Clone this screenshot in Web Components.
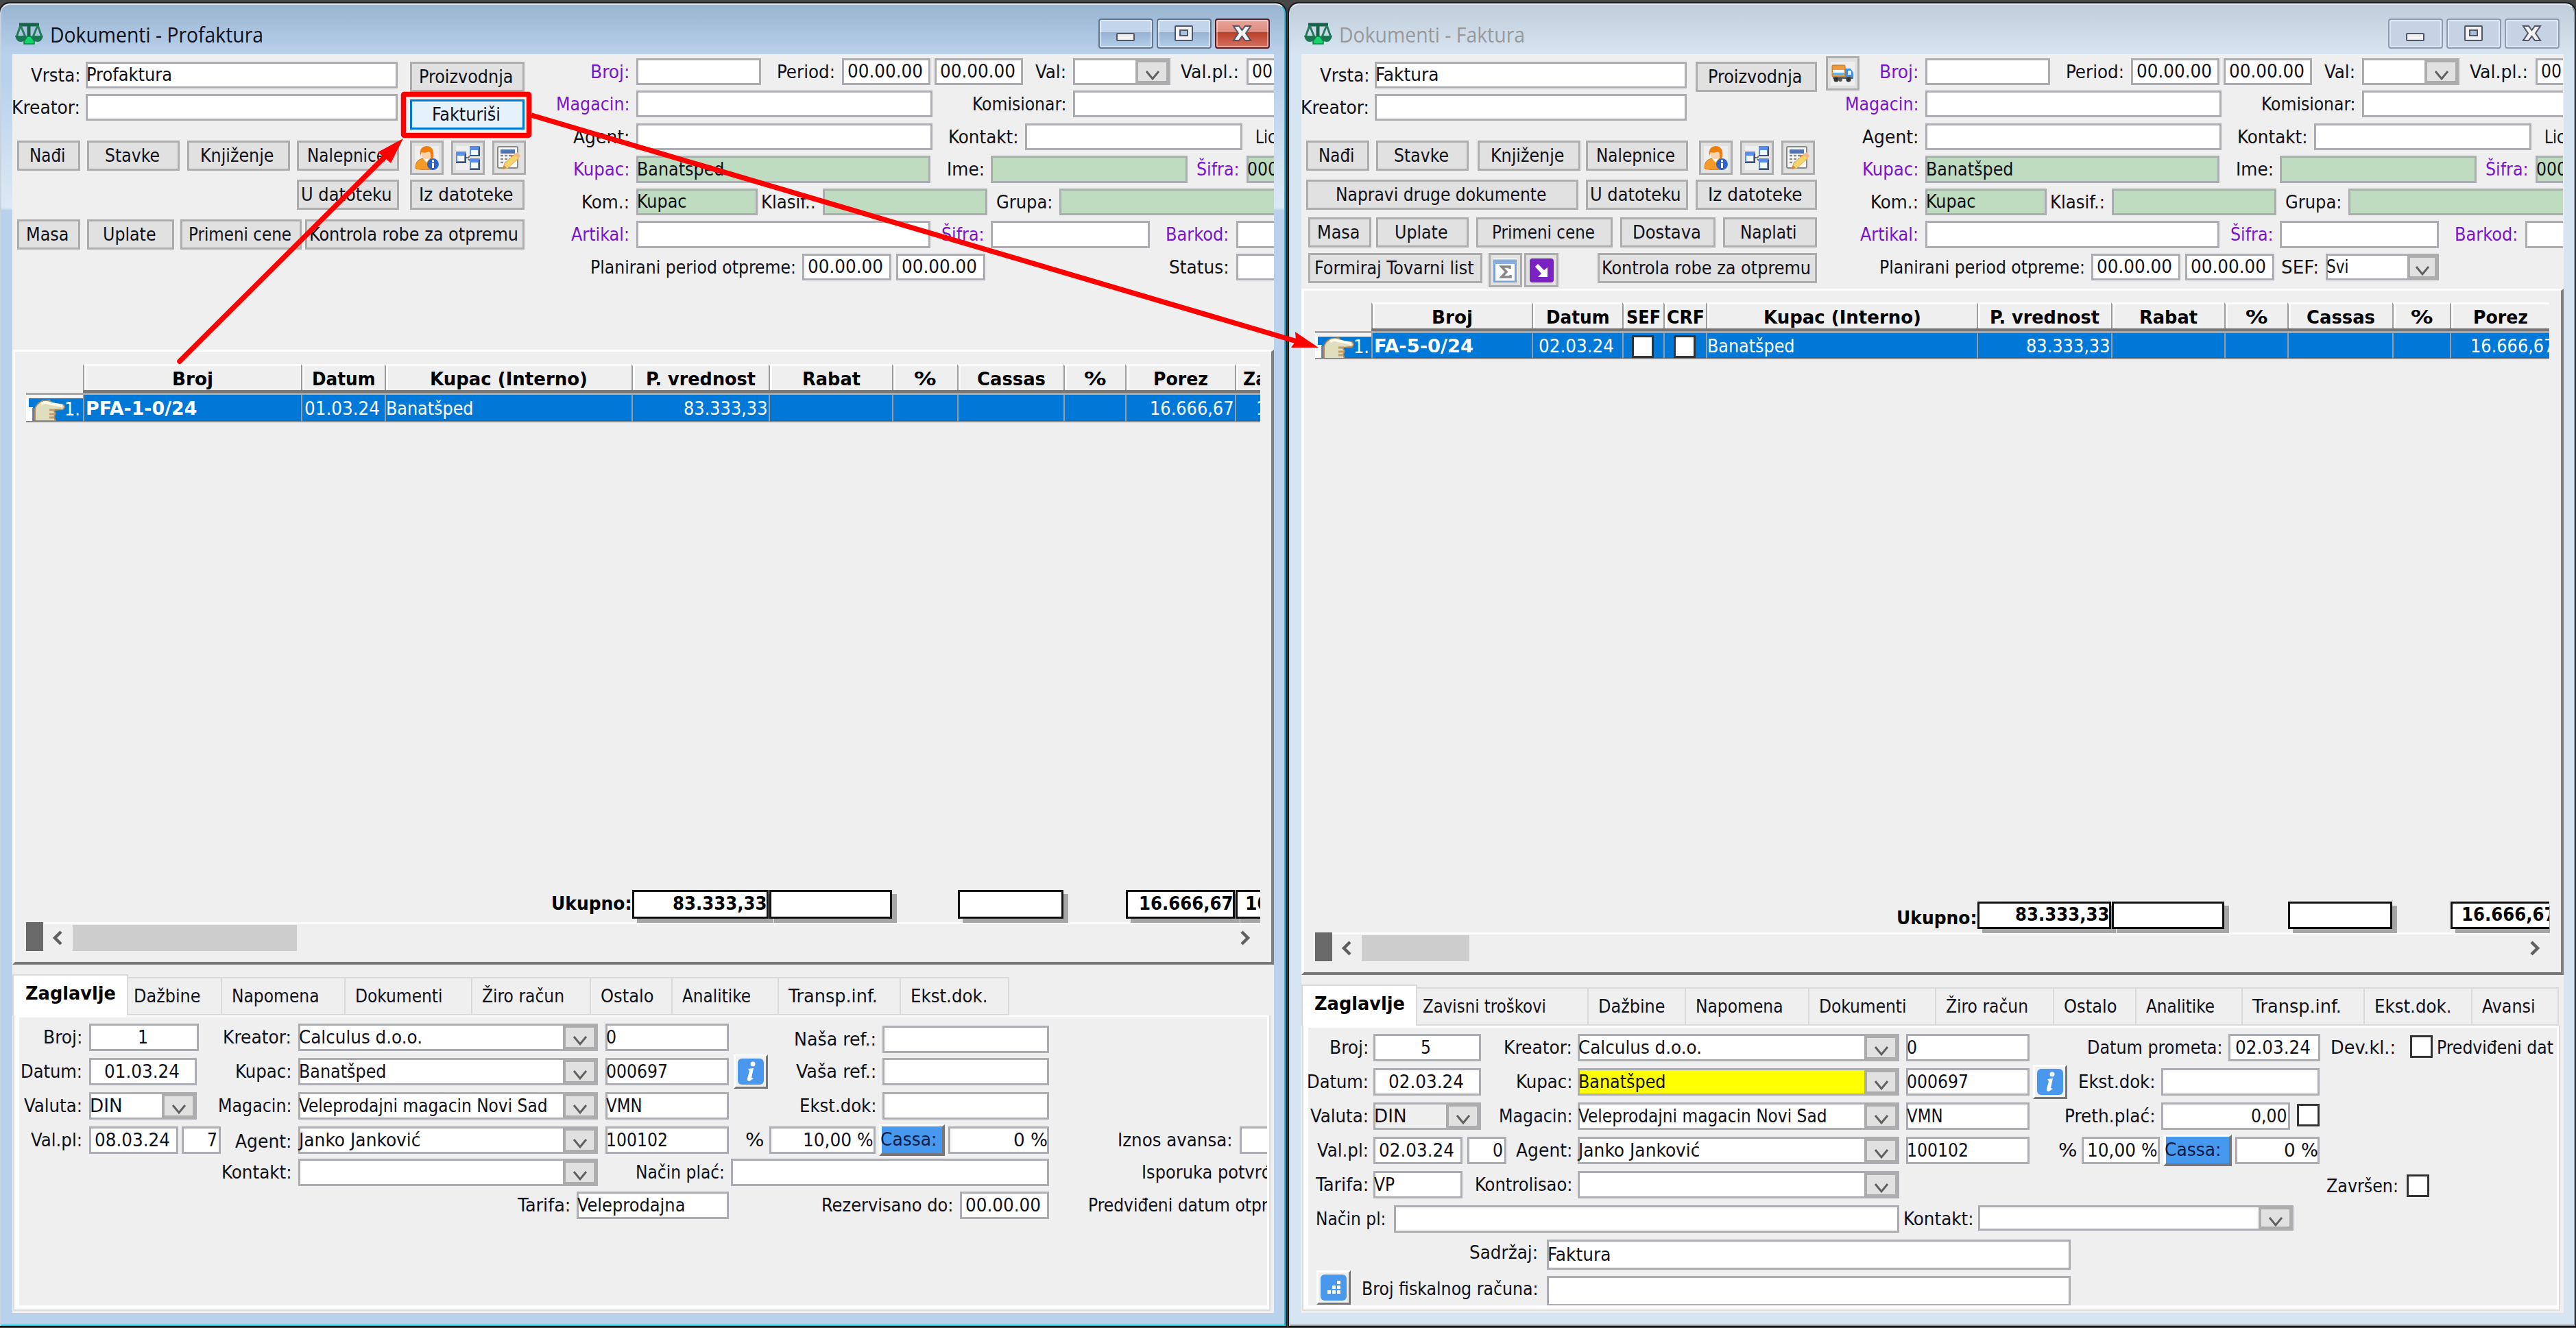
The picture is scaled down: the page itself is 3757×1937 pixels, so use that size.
<!DOCTYPE html>
<html lang="sr">
<head>
<meta charset="utf-8">
<title>Dokumenti</title>
<style>
    html, body {
        margin: 0;
        width: 3757px;
        height: 1937px;
        overflow: hidden;
        background: #474747;
    }

    body {
        display: flex;
        position: relative;
        font-family: 'DejaVu Sans Condensed', 'DejaVu Sans', sans-serif;
        font-stretch: condensed;
        font-size: 27.3px;
        color: #101018;
    }

    .tools {
        display: flex;
        overflow: hidden;
        flex: none;
    }
</style>
</head>
<body>

<doc-window caption="Dokumenti - Profaktura" caption-width="311" active>
    <div class="tools" style="height: 431px">
        <form-stack x="18" y="79" w="757">
            <form-row y="90" h="39">
                <ui-label to="117">Vrsta:</ui-label><ui-field at="125" w="455">Profaktura</ui-field>
                <ui-button at="598" w="167">Proizvodnja</ui-button>
            </form-row>
            <form-row y="137" h="39">
                <ui-label to="117">Kreator:</ui-label><ui-field at="125" w="455"></ui-field>
                <ui-button at="598" w="167" dy="8" focused>Fakturiši</ui-button>
            </form-row>
            <form-row y="205" h="50">
                <ui-button at="25" w="92">Nađi</ui-button><ui-button at="127" w="135">Stavke</ui-button>
                <ui-button at="273" w="150">Knjiženje</ui-button><ui-button at="433" w="149">Nalepnice</ui-button>
                <ui-icon at="598" w="49" name="person"></ui-icon><ui-icon at="658" w="49" name="tree"></ui-icon>
                <ui-icon at="718" w="49" name="note"></ui-icon>
            </form-row>
            <form-row y="262" h="44">
                <ui-button at="433" w="149">U datoteku</ui-button><ui-button at="598" w="167">Iz datoteke</ui-button>
            </form-row>
            <form-row y="320" h="44">
                <ui-button at="25" w="92">Masa</ui-button><ui-button at="127" w="127">Uplate</ui-button>
                <ui-button at="263" w="177">Primeni cene</ui-button><ui-button at="445" w="320">Kontrola robe za otpremu</ui-button>
            </form-row>
        </form-stack>
        <search-fields></search-fields>
    </div>
    <record-list doc="profaktura" style="height: 897px"></record-list>
    <tab-strip doc="profaktura"></tab-strip>
    <tab-page>
        <form-stack x="28" y="1484" w="1820">
            <form-row y="1493" h="40">
                <ui-label to="120">Broj:</ui-label><ui-field at="130" w="160" align="center">1</ui-field>
                <ui-label to="425">Kreator:</ui-label><ui-combo at="435" w="437">Calculus d.o.o.</ui-combo><ui-field at="883" w="180">0</ui-field>
                <ui-label to="1278" dy="3">Naša ref.:</ui-label><ui-field at="1287" w="243" dy="3"></ui-field>
            </form-row>
            <form-row y="1543" h="40">
                <ui-label to="120">Datum:</ui-label><ui-field at="130" w="157" align="center">01.03.24</ui-field>
                <ui-label to="425">Kupac:</ui-label><ui-combo at="435" w="437">Banatšped</ui-combo><ui-field at="883" w="180">000697</ui-field>
                <ui-icon at="1070" w="50" dy="-5" name="info" raised></ui-icon>
                <ui-label to="1278">Vaša ref.:</ui-label><ui-field at="1287" w="243"></ui-field>
            </form-row>
            <form-row y="1593" h="40">
                <ui-label to="120">Valuta:</ui-label><ui-combo at="130" w="157">DIN</ui-combo>
                <ui-label to="425">Magacin:</ui-label><ui-combo at="435" w="437">Veleprodajni magacin Novi Sad</ui-combo><ui-field at="883" w="180">VMN</ui-field>
                <ui-label to="1278">Ekst.dok:</ui-label><ui-field at="1287" w="243"></ui-field>
            </form-row>
            <form-row y="1643" h="40">
                <ui-label to="120">Val.pl:</ui-label><ui-field at="130" w="130" align="center">08.03.24</ui-field><ui-field at="265" w="57" align="right">7</ui-field>
                <ui-label to="425" dy="2">Agent:</ui-label><ui-combo at="435" w="437">Janko Janković</ui-combo><ui-field at="883" w="180">100102</ui-field>
                <ui-label to="1114">%</ui-label><ui-field at="1122" w="155" align="right">10,00 %</ui-field>
                <ui-button at="1282" w="96" dy="-3" accent>Cassa:</ui-button><ui-field at="1383" w="147" align="right">0 %</ui-field>
                <ui-label to="1797">Iznos avansa:</ui-label><ui-field at="1808" w="90"></ui-field>
            </form-row>
            <form-row y="1690" h="40">
                <ui-label to="425">Kontakt:</ui-label><ui-combo at="435" w="437"></ui-combo>
                <ui-label to="1057">Način plać:</ui-label><ui-field at="1066" w="464"></ui-field>
                <ui-label from="1665">Isporuka potvrđ</ui-label>
            </form-row>
            <form-row y="1738" h="40">
                <ui-label to="832">Tarifa:</ui-label><ui-field at="841" w="222">Veleprodajna</ui-field>
                <ui-label to="1390">Rezervisano do:</ui-label><ui-field at="1400" w="130" align="center">00.00.00</ui-field>
                <ui-label from="1587">Predviđeni datum otpr</ui-label>
            </form-row>
        </form-stack>
    </tab-page>
</doc-window>

<doc-window caption="Dokumenti - Faktura" caption-width="271">
    <div class="tools" style="height: 342px">
        <form-stack x="18" y="79" w="757">
            <form-row y="90" h="39">
                <ui-label to="117">Vrsta:</ui-label><ui-field at="125" w="455">Faktura</ui-field>
                <ui-button at="593" w="177">Proizvodnja</ui-button>
            </form-row>
            <form-row y="137" h="39">
                <ui-label to="117">Kreator:</ui-label><ui-field at="125" w="455"></ui-field>
            </form-row>
            <form-row y="205" h="50">
                <ui-button at="25" w="92">Nađi</ui-button><ui-button at="127" w="135">Stavke</ui-button>
                <ui-button at="275" w="150">Knjiženje</ui-button><ui-button at="433" w="149">Nalepnice</ui-button>
                <ui-icon at="598" w="49" name="person"></ui-icon><ui-icon at="658" w="49" name="tree"></ui-icon>
                <ui-icon at="718" w="49" name="note"></ui-icon>
            </form-row>
            <form-row y="262" h="44">
                <ui-button at="25" w="397">Napravi druge dokumente</ui-button>
                <ui-button at="433" w="149">U datoteku</ui-button><ui-button at="593" w="177">Iz datoteke</ui-button>
            </form-row>
            <form-row y="317" h="44">
                <ui-button at="28" w="92">Masa</ui-button><ui-button at="127" w="135">Uplate</ui-button>
                <ui-button at="273" w="199">Primeni cene</ui-button><ui-button at="483" w="139">Dostava</ui-button>
                <ui-button at="633" w="137">Naplati</ui-button>
            </form-row>
            <form-row y="369" h="50">
                <ui-button at="28" w="254">Formiraj Tovarni list</ui-button>
                <ui-icon at="291" w="49" name="sum"></ui-icon><ui-icon at="343" w="50" name="export"></ui-icon>
                <ui-button at="450" w="320">Kontrola robe za otpremu</ui-button>
            </form-row>
        </form-stack>
        <search-fields invoice></search-fields>
    </div>
    <record-list doc="faktura" style="height: 1001px"></record-list>
    <tab-strip doc="faktura"></tab-strip>
    <tab-page>
        <form-stack x="28" y="1499" w="1820">
            <form-row y="1508" h="40">
                <ui-label to="116">Broj:</ui-label><ui-field at="123" w="157" align="center">5</ui-field>
                <ui-label to="413">Kreator:</ui-label><ui-combo at="421" w="469">Calculus d.o.o.</ui-combo><ui-field at="900" w="180">0</ui-field>
                <ui-label to="1361">Datum prometa:</ui-label><ui-field at="1370" w="134" align="center">02.03.24</ui-field>
                <ui-label to="1614">Dev.kl.:</ui-label><ui-check at="1635" w="33" dy="2"></ui-check><ui-label from="1674">Predviđeni dat</ui-label>
            </form-row>
            <form-row y="1558" h="40">
                <ui-label to="116">Datum:</ui-label><ui-field at="123" w="157" align="center">02.03.24</ui-field>
                <ui-label to="413">Kupac:</ui-label><ui-combo at="421" w="469" fill="#ffff00">Banatšped</ui-combo><ui-field at="900" w="180">000697</ui-field>
                <ui-icon at="1085" w="50" dy="-5" name="info" raised></ui-icon>
                <ui-label to="1263">Ekst.dok:</ui-label><ui-field at="1272" w="231"></ui-field>
            </form-row>
            <form-row y="1608" h="40">
                <ui-label to="116">Valuta:</ui-label><ui-combo at="123" w="157" fill="#efefef">DIN</ui-combo>
                <ui-label to="413">Magacin:</ui-label><ui-combo at="421" w="469">Veleprodajni magacin Novi Sad</ui-combo><ui-field at="900" w="180">VMN</ui-field>
                <ui-label to="1263">Preth.plać:</ui-label><ui-field at="1272" w="188" align="right">0,00</ui-field>
                <ui-check at="1470" w="33" dy="2"></ui-check>
            </form-row>
            <form-row y="1658" h="40">
                <ui-label to="116">Val.pl:</ui-label><ui-field at="123" w="130" align="center">02.03.24</ui-field><ui-field at="260" w="57" align="right">0</ui-field>
                <ui-label to="413">Agent:</ui-label><ui-combo at="421" w="469">Janko Janković</ui-combo><ui-field at="900" w="180">100102</ui-field>
                <ui-label to="1149">%</ui-label><ui-field at="1156" w="114" align="right">10,00 %</ui-field>
                <ui-button at="1275" w="100" dy="-3" accent>Cassa:</ui-button><ui-field at="1380" w="123" align="right">0 %</ui-field>
            </form-row>
            <form-row y="1708" h="40">
                <ui-label to="116">Tarifa:</ui-label><ui-field at="123" w="130">VP</ui-field>
                <ui-label to="413">Kontrolisao:</ui-label><ui-combo at="421" w="469"></ui-combo>
                <ui-label to="1618" dy="2">Završen:</ui-label><ui-check at="1630" w="33" dy="5"></ui-check>
            </form-row>
            <form-row y="1758" h="40">
                <ui-label to="141">Način pl:</ui-label><ui-field at="153" w="737"></ui-field>
                <ui-label to="998">Kontakt:</ui-label><ui-combo at="1005" w="460" style="height: 37px"></ui-combo>
            </form-row>
            <form-row y="1808" h="44">
                <ui-label to="363" dy="-1">Sadržaj:</ui-label><ui-field at="376" w="764">Faktura</ui-field>
            </form-row>
            <form-row y="1861" h="44">
                <ui-icon at="40" w="50" dy="-8" name="dots" raised></ui-icon>
                <ui-label to="363" dy="-1">Broj fiskalnog računa:</ui-label><ui-field at="376" w="764"></ui-field>
            </form-row>
        </form-stack>
    </tab-page>
</doc-window>

<step-arrows></step-arrows>

<script>
//Advance widths of the interface font at 11px, in whole pixels
const REGULAR = {
    ' ': 3, '.': 4, ',': 3, ':': 4, '-': 4, '%': 11, '/': 4, '(': 4, ')': 4,
    a: 6, b: 6, c: 5, d: 6, e: 6, f: 3, g: 6, h: 6, i: 2, j: 3, k: 5, l: 2, m: 8, n: 6, o: 6, p: 6, r: 4, s: 5, t: 4, u: 6, v: 5, z: 5,
    A: 7, B: 6, C: 7, D: 8, E: 6, F: 6, G: 7, I: 4, J: 5, K: 6, L: 5, M: 8, N: 7, O: 8, P: 6, R: 7, S: 6, T: 6, U: 7, V: 6, Z: 6,
    'š': 5, 'đ': 6, 'ž': 5, 'č': 5, 'ć': 5, 'Š': 6, 'Ž': 6
};
const BOLD = {
    ' ': 3, '.': 3, ',': 3, ':': 4, '-': 5, '%': 13, '/': 6, '(': 5, ')': 5,
    a: 7, b: 7, c: 6, d: 7, e: 7, g: 7, j: 4, k: 7, l: 3, m: 10, n: 7, o: 7, p: 7, r: 5, s: 6, t: 5, u: 7, v: 7, z: 6,
    A: 8, B: 8, C: 8, D: 8, E: 7, F: 6, I: 6, K: 8, P: 7, R: 8, S: 7, U: 8, Z: 7
};
const SCALE = 2.5;

//Text squeezed or stretched to the width of the interface font
class UiText extends HTMLElement {
    connectedCallback() {
        const root = this.shadowRoot || this.attachShadow({mode: 'open'});
        root.innerHTML = `
            <style>
                :host { display: block; flex: none; white-space: nowrap; line-height: 1.2; }
                :host([bold]) { font-weight: bold; }
                span { display: inline-block; transform-origin: 0 50%; }
            </style>
            <span><slot></slot></span>`;
        const text = this.textContent;
        const bold = this.hasAttribute('bold');
        const table = bold ? BOLD : REGULAR;
        let width = Number(this.getAttribute('width'));
        if (!width) {
            width = [...text].reduce((sum, ch) => sum + (table[ch] || (bold ? 7 : 6)), 0) * SCALE;
        }
        const span = root.querySelector('span');
        const natural = span.getBoundingClientRect().width;
        this.style.width = width + 'px';
        const shift = bold || this.hasAttribute('flush') ? 0 : -2;
        if (natural) span.style.transform = `translateX(${shift}px) scaleX(${width / natural})`;
    }
}
customElements.define('ui-text', UiText);

//Base of the form controls: takes its text and renders it in a shadow root
class Control extends HTMLElement {
    connectedCallback() {
        const root = this.shadowRoot || this.attachShadow({mode: 'open'});
        root.innerHTML = this.render(this.textContent.trim());
    }
    textTag(text, attrs = '') {
        return text ? `<ui-text ${attrs}>${text}</ui-text>` : '';
    }
}

class UiLabel extends Control {
    render(text) {
        return `
            <style>
                :host { display: flex; flex: none; align-items: center; justify-content: flex-end; height: 40px; }
                :host([from]) { justify-content: flex-start; }
                :host([key]) { color: #7a14cf; }
            </style>${this.textTag(text, 'flush')}`;
    }
}
customElements.define('ui-label', UiLabel);

class UiField extends Control {
    render(text) {
        const justify = {center: 'center', right: 'flex-end'}[this.getAttribute('align')] || 'flex-start';
        return `
            <style>
                :host {
                    display: flex; flex: none; box-sizing: border-box; align-self: stretch; align-items: center;
                    justify-content: ${justify}; border: 3px solid #abadb3;
                    background: ${this.getAttribute('fill') || '#fff'};
                }
            </style>${this.textTag(text)}`;
    }
}
customElements.define('ui-field', UiField);

class UiCombo extends Control {
    render(text) {
        return `
            <style>
                :host {
                    display: flex; flex: none; box-sizing: border-box; align-self: stretch;
                    border: 3px solid #abadb3; background: ${this.getAttribute('fill') || '#fff'};
                }
                .value { flex: 1; display: flex; align-items: center; }
                .drop {
                    width: ${this.getAttribute('drop') || 41}px; border: 3px solid #adadad; background: #e1e1e1;
                    display: flex; justify-content: center; align-items: center; outline: 1px solid #adadad;
                }
            </style>
            <div class="value">${this.textTag(text)}</div>
            <div class="drop">
                <svg width="24" height="26" viewBox="0 0 24 26"><path d="M3 12 L12 23 L21 12" fill="none" stroke="#606060" stroke-width="3"/></svg>
            </div>`;
    }
}
customElements.define('ui-combo', UiCombo);

class UiButton extends Control {
    render(text) {
        return `
            <style>
                :host {
                    display: flex; flex: none; box-sizing: border-box; height: 44px; align-items: center; justify-content: center;
                    border: 3px solid #adadad; background: #e1e1e1;
                }
                :host([focused]) { border-color: #0078d7; background: #e5f1fb; box-shadow: 0 0 0 3px #efefef; }
                :host([accent]) {
                    height: 46px; background: #4699ee; border: 3px solid; border-color: #fff #777 #777 #fff; border-width: 3px 4px 4px 4px;
                    color: #0b1b45; justify-content: flex-start;
                }
            </style>${this.textTag(text)}`;
    }
}
customElements.define('ui-button', UiButton);

class UiCheck extends Control {
    render() {
        return `<style>:host { display: block; flex: none; box-sizing: border-box; height: 33px; border: 3px solid #333; background: #fff; }</style>`;
    }
}
customElements.define('ui-check', UiCheck);

const ICONS = {
    person: `
        <rect width="35" height="35" fill="#eee"/>
        <path d="M1 33 Q0 20 12 18 L22 18 Q30 20 30 34 Q14 36 1 33Z" fill="#f59a26" stroke="#d97c10"/>
        <path d="M12 18 L17 24 L22 18Z" fill="#fff"/>
        <circle cx="17" cy="11" r="8" fill="#f9d3ac"/>
        <path d="M8 14 Q6 1 17 0 Q29 0 27 17 L23 19 Q24 11 21 8 Q15 11 10 9Z" fill="#ee7d0c"/>
        <circle cx="26.500" cy="26.500" r="8.500" fill="#2c64cf"/>
        <path d="M26.500 20.500 v3 M26.500 25 v7" stroke="#fff" stroke-width="3"/>`,
    tree: `
        <rect width="35" height="35" fill="#eee"/>
        <path d="M14 17 h4 M18 17 L22 12 M18 19 L22 23" stroke="#45618e" stroke-width="2" stroke-dasharray="3 2"/>
        <rect x="0" y="8" width="15" height="17" fill="#5a8cf0"/><rect x="2" y="14" width="10" height="8" fill="#f5f9ff"/><path d="M0 24 h14 v-13" fill="none" stroke="#35527f" stroke-width="2"/>
        <rect x="20" y="0" width="15" height="15" fill="#5a8cf0"/><rect x="22" y="6" width="10" height="7" fill="#f5f9ff"/><path d="M20 14 h14 V2" fill="none" stroke="#35527f" stroke-width="2"/>
        <rect x="20" y="18" width="15" height="17" fill="#5a8cf0"/><rect x="22" y="24" width="10" height="8" fill="#f5f9ff"/><path d="M20 34 h14 V20" fill="none" stroke="#35527f" stroke-width="2"/>`,
    note: `
        <rect x="1" y="1" width="29" height="31" rx="2" fill="#fafafa" stroke="#888" stroke-width="2"/>
        <rect x="5" y="5" width="21" height="6" fill="#4f74b1"/>
        <path d="M5 14 h17 M5 19 h14 M5 24 h9" stroke="#888" stroke-width="2.500" stroke-dasharray="4 2"/>
        <path d="M20 14.500 h5" stroke="#e2695b" stroke-width="3"/>
        <path d="M8 34 L11 25 L27 11 L32 17 L16 32Z" fill="#f5d46c" stroke="#d9a94e"/>
        <path d="M25 12 L30 9 L34 14 L31 18Z" fill="#f0b98a"/><path d="M8 34 l2 -6 4 4z" fill="#c58a55"/>`,
    truck: `
        <rect width="35" height="35" fill="#eee"/>
        <rect x="2" y="5" width="19" height="17" rx="1" fill="#ef9b3c" stroke="#c36f16"/>
        <rect x="3" y="12" width="17" height="4" fill="#fff"/><rect x="3" y="16" width="17" height="3" fill="#59b5e8"/>
        <path d="M21 10 h8 l4 6 v9 h-12z" fill="#3f8ee8"/><rect x="25" y="13" width="5" height="6" fill="#eaf5ff"/>
        <rect x="3" y="22" width="29" height="3" fill="#666"/>
        <circle cx="8" cy="26" r="3.500" fill="#333"/><circle cx="14" cy="26" r="3" fill="#555"/><circle cx="26" cy="26" r="3.500" fill="#333"/>`,
    sum: `
        <rect width="35" height="35" fill="#fff"/>
        <rect x="1.500" y="3" width="31" height="31" fill="#fbfbfb" stroke="#7ba0d4" stroke-width="3"/>
        <rect x="1" y="2" width="32" height="6" fill="#88aee0"/>
        <path d="M24 15 V12 H12 L19 19.500 L12 27 H25 V24" fill="none" stroke="#888" stroke-width="3.500"/>`,
    export: `
        <rect width="35" height="35" rx="4" fill="#7b22c2"/>
        <path d="M8 12 L12 8 L21 17 L26 13 V27 H12 L17 22Z" fill="#fff"/>`,
    info: `
        <rect width="38" height="38" rx="6" fill="#4a98ee"/>
        <circle cx="22" cy="8" r="3.500" fill="#fff"/>
        <path d="M15 15 L23 14 L20 28 L23 29 L17 33 Q13 33 14 29 L17 18Z" fill="#fff"/>`,
    dots: `
        <rect width="38" height="38" rx="6" fill="#4a98ee"/>
        <path d="M24 9 h5 v5 h-5z M17 16 h5 v5 h-5z M24 16 h5 v5 h-5z M10 23 h5 v5 h-5z M17 23 h5 v5 h-5z M24 23 h5 v5 h-5z" fill="#fff"/>`
};

class UiIcon extends Control {
    render() {
        const size = this.hasAttribute('raised') ? 38 : 35;
        return `
            <style>
                :host {
                    display: flex; flex: none; box-sizing: border-box; height: 50px; align-items: center; justify-content: center;
                    border: 3px solid #adadad; background: #e1e1e1;
                }
                :host([raised]) { background: #f0f0f0; border-color: #fff #777 #777 #fff; }
                svg { display: block; }
            </style>
            <svg width="${size}" height="${size}" viewBox="0 0 ${size} ${size}">${ICONS[this.getAttribute('name')]}</svg>`;
    }
}
customElements.define('ui-icon', UiIcon);

class FormRow extends HTMLElement {
    connectedCallback() {
        const root = this.attachShadow({mode: 'open'});
        root.innerHTML = `<style>:host { display: flex; flex: none; align-items: flex-start; }</style><slot></slot>`;
        this.style.height = this.getAttribute('h') + 'px';

        let cursor = Number(this.closest('form-stack').getAttribute('x'));
        for (const child of this.children) {
            const to = child.getAttribute('to');
            if (to) {
                child.style.width = (to - cursor) + 'px';
                cursor = Number(to);
            } else {
                const at = Number(child.getAttribute('at') || child.getAttribute('from'));
                const w = Number(child.getAttribute('w') || 0);
                child.style.marginLeft = (at - cursor) + 'px';
                child.style.width = w + 'px';
                cursor = at + w;
            }
            const dy = child.getAttribute('dy');
            if (dy) {
                child.style.marginTop = dy + 'px';
                child.style.marginBottom = -dy + 'px';
            }
        }
    }
}

class FormStack extends HTMLElement {
    connectedCallback() {
        const root = this.attachShadow({mode: 'open'});
        root.innerHTML = `<style>:host { display: flex; flex-direction: column; flex: none; }</style><slot></slot>`;
        this.style.width = this.getAttribute('w') + 'px';
        let cursor = Number(this.getAttribute('y'));
        for (const row of this.children) {
            row.style.marginTop = (row.getAttribute('y') - cursor) + 'px';
            cursor = Number(row.getAttribute('y')) + Number(row.getAttribute('h'));
        }
    }
}
customElements.define('form-stack', FormStack);
customElements.define('form-row', FormRow);

//The search criteria, the same in both windows but for the last row
class SearchFields extends HTMLElement {
    connectedCallback() {
        const invoice = this.hasAttribute('invoice');
        const green = 'fill="#c0dcc0"';
        this.attachShadow({mode: 'open'}).innerHTML = `
            <style>:host { display: block; flex: none; width: 1083px; overflow: hidden; }</style>
            <form-stack x="775" y="79" w="1083">
                <form-row y="85" h="39">
                    ${invoice ? '<ui-icon at="783" w="49" dy="-3" name="truck"></ui-icon>' : ''}
                    <ui-label to="918" key>Broj:</ui-label><ui-field at="928" w="182"></ui-field>
                    <ui-label to="1218">Period:</ui-label><ui-field at="1228" w="129" align="center">00.00.00</ui-field>
                    <ui-field at="1363" w="129" align="center">00.00.00</ui-field>
                    <ui-label to="1555">Val:</ui-label><ui-combo at="1565" w="142"></ui-combo>
                    <ui-label to="1807">Val.pl.:</ui-label><ui-field at="1818" w="50" align="center">00</ui-field>
                </form-row>
                <form-row y="132" h="39">
                    <ui-label to="918" key>Magacin:</ui-label><ui-field at="928" w="432"></ui-field>
                    <ui-label to="1555">Komisionar:</ui-label><ui-field at="1565" w="400"></ui-field>
                </form-row>
                <form-row y="180" h="39">
                    <ui-label to="918">Agent:</ui-label><ui-field at="928" w="432"></ui-field>
                    <ui-label to="1485">Kontakt:</ui-label><ui-field at="1495" w="317"></ui-field>
                    <ui-label from="1831">Lic</ui-label>
                </form-row>
                <form-row y="227" h="40">
                    <ui-label to="918" key>Kupac:</ui-label><ui-field at="928" w="429" ${green}>Banatšped</ui-field>
                    <ui-label to="1436">Ime:</ui-label><ui-field at="1445" w="287" ${green}></ui-field>
                    <ui-label to="1807" key>Šifra:</ui-label><ui-field at="1818" w="130" ${green}>000</ui-field>
                </form-row>
                <form-row y="275" h="39">
                    <ui-label to="918">Kom.:</ui-label><ui-field at="928" w="177" ${green}>Kupac</ui-field>
                    <ui-label to="1190">Klasif.:</ui-label><ui-field at="1200" w="240" ${green}></ui-field>
                    <ui-label to="1535">Grupa:</ui-label><ui-field at="1545" w="400" ${green}></ui-field>
                </form-row>
                <form-row y="322" h="40">
                    <ui-label to="918" key>Artikal:</ui-label><ui-field at="928" w="429"></ui-field>
                    <ui-label to="1435" key>Šifra:</ui-label><ui-field at="1445" w="232"></ui-field>
                    <ui-label to="1792" key>Barkod:</ui-label><ui-field at="1803" w="200"></ui-field>
                </form-row>
                <form-row y="370" h="39">
                    <ui-label to="1161">Planirani period otpreme:</ui-label><ui-field at="1170" w="130" align="center">00.00.00</ui-field>
                    <ui-field at="1307" w="130" align="center">00.00.00</ui-field>
                    ${invoice
                        ? '<ui-label to="1502">SEF:</ui-label><ui-combo at="1512" w="165" drop="36"><span>Svi</span></ui-combo>'
                        : '<ui-label to="1792">Status:</ui-label><ui-field at="1803" w="200"></ui-field>'}
                </form-row>
            </form-stack>`;
    }
}
customElements.define('search-fields', SearchFields);

//Column edges are measured from the left side of the window
const DOCS = {
    profaktura: {
        edges: [38, 121, 439, 561, 921, 1121, 1301, 1396, 1551, 1641, 1801, 1838],
        heads: ['', 'Broj', 'Datum', 'Kupac (Interno)', 'P. vrednost', 'Rabat', '%', 'Cassas', '%', 'Porez', 'Za'],
        cells: ['', '<b>PFA-1-0/24', '01.03.24', 'Banatšped', '>83.333,33', '', '', '', '', '>16.666,67', '=1'],
        totals: {4: '83.333,33', 5: '', 7: '', 9: '16.666,67', 10: '10'},
        sumRow: [42, 0], thumb: 327,
        tabs: ['Zaglavlje', 'Dažbine', 'Napomena', 'Dokumenti', 'Žiro račun', 'Ostalo', 'Analitike', 'Transp.inf.', 'Ekst.dok.'],
        tabEdges: [187, 324, 504, 689, 862, 981, 1136, 1314, 1472]
    },
    faktura: {
        edges: [38, 120, 354, 486, 546, 608, 1003, 1199, 1364, 1456, 1609, 1693, 1838],
        heads: ['', 'Broj', 'Datum', 'SEF', 'CRF', 'Kupac (Interno)', 'P. vrednost', 'Rabat', '%', 'Cassas', '%', 'Porez'],
        cells: ['', '<b>FA-5-0/24', '02.03.24', '?', '?', 'Banatšped', '>83.333,33', '', '', '', '', '=16.666,67'],
        totals: {6: '83.333,33', 7: '', 9: '', 11: '16.666,67'},
        sumRow: [40, 10], thumb: 157,
        tabs: ['Zaglavlje', 'Zavisni troškovi', 'Dažbine', 'Napomena', 'Dokumenti', 'Žiro račun', 'Ostalo', 'Analitike', 'Transp.inf.', 'Ekst.dok.', 'Avansi'],
        tabEdges: [187, 437, 579, 759, 944, 1116, 1236, 1391, 1569, 1726, 1852]
    }
};

class RecordList extends HTMLElement {
    cell(value) {
        if (value === '?') return '<div class="cell mid"><ui-check></ui-check></div>';
        if (value.startsWith('<b>')) return `<div class="cell"><ui-text bold>${value.slice(3)}</ui-text></div>`;
        if (value.startsWith('>')) return `<div class="cell end"><ui-text>${value.slice(1)}</ui-text></div>`;
        if (value.startsWith('=')) return `<div class="cell cut"><ui-text>${value.slice(1)}</ui-text></div>`;
        if (/^\d/.test(value)) return `<div class="cell mid"><ui-text>${value}</ui-text></div>`;
        return `<div class="cell">${value ? `<ui-text>${value}</ui-text>` : ''}</div>`;
    }

    connectedCallback() {
        const doc = DOCS[this.getAttribute('doc')];
        const faktura = this.getAttribute('doc') === 'faktura';
        const widths = doc.edges.slice(1).map((edge, i) => (edge - doc.edges[i]) + 'px').join(' ');
        const first = Math.min(...Object.keys(doc.totals));

        const heads = doc.heads.slice(1).map((head, i) =>
            `<div class="head ${head === 'Za' ? 'left' : ''}"><ui-text bold>${head}</ui-text></div>`).join('');
        const cells = doc.cells.slice(1).map(value => this.cell(value)).join('');
        const totals = Object.entries(doc.totals).map(([col, value]) => {
            const cut = Number(col) === doc.heads.length - 1;
            return `<div class="total ${cut ? 'cut' : ''}" style="grid-column: ${Number(col) + 1}">${value ? `<ui-text bold>${value}</ui-text>` : ''}</div>`;
        }).join('');

        this.attachShadow({mode: 'open'}).innerHTML = `
            <style>
                :host {
                    display: flex; flex-direction: column; flex: none; box-sizing: border-box; background: #efefef;
                    border: solid; border-width: 3px 4px 4px 4px; border-color: #fcfcfc #808080 #777 #fcfcfc;
                    padding: ${faktura ? 17 : 18}px 16px 16px 16px;
                }
                .grid { display: grid; grid-template-columns: ${widths}; overflow: hidden; flex: none; }
                .head {
                    display: flex; align-items: center; justify-content: center; height: 38px; box-sizing: border-box; overflow: hidden;
                    border-left: 2px solid #9b9b9b; border-top: 3px solid #fcfcfc; padding-top: 4px; color: #000; white-space: nowrap;
                    box-shadow: inset 3px 0 #fafafa;
                }
                .head.left { justify-content: flex-start; padding-left: 10px; }
                .band { grid-column: 2 / -1; height: 7px; background: linear-gradient(#777 60%, #a8a8a8 60%); }
                .void { height: 7px; background: linear-gradient(#efefef 55%, #a8a8a8 55%); }
                .cell {
                    display: flex; align-items: center; height: ${faktura ? 38 : 40}px; box-sizing: border-box; overflow: hidden;
                    background: #0078d7; color: #fff; border-left: 2px solid #9b9b9b; border-bottom: 2px solid #8b8b8b; padding: 3px 0 0 2px;
                }
                .cell.mid { justify-content: center; padding: 3px 0 0; }
                .cell.end { justify-content: flex-end; padding: 3px 0 0; }
                .cell.cut { padding-left: ${faktura ? 30 : 31}px; }
                .cell ui-check { width: 32px; margin-left: -2px; }
                .num {
                    display: flex; align-items: center; height: ${faktura ? 38 : 40}px; box-sizing: border-box; overflow: hidden;
                    background: #0078d7; color: #fff; border-top: 5px solid #f6f6f6; border-bottom: 2px solid #8b8b8b;
                    box-shadow: inset 4px 0 #fff;
                }
                .num svg { flex: none; }
                .rest { flex: 1; }
                .sum { height: ${doc.sumRow[0] + 5}px; color: #000; overflow: visible; clip-path: inset(0 0 -2px 0); }
                .caption { height: ${doc.sumRow[0]}px; display: flex; align-items: center; justify-content: flex-end; padding-top: ${doc.sumRow[1]}px; box-sizing: border-box; white-space: nowrap; }
                .caption ui-text { margin-top: -2px; }
                .total {
                    height: ${doc.sumRow[0]}px; box-sizing: border-box; display: flex; align-items: center; justify-content: flex-end; overflow: hidden;
                    margin-left: 1px; border: 3px solid #111; background: #fff; box-shadow: 7px 6px #a6a6a6;
                    position: relative; padding-bottom: 2px;
                }
                .total.cut { border-right: 0; justify-content: flex-start; padding-left: ${faktura ? 13 : 11}px; }
                .bar { display: flex; align-items: center; height: 42px; border-top: 0; margin-right: 1px; flex: none; }
                .grip { width: 25px; height: 42px; background: #696969; }
                .track { flex: 1; display: flex; align-items: center; height: 39px; border-top: 3px solid #fcfcfc; }
                .thumb { width: ${doc.thumb}px; height: 38px; background: #cdcdcd; margin-left: 14px; }
                .back { margin-left: 11px; }
                .next { margin-left: auto; margin-right: 11px; }
            </style>
            <div class="grid">
                <div></div>${heads}
                <div class="void"></div><div class="band"></div>
                <div class="num">
                    <svg width="58" height="32" viewBox="0 0 58 32">
                        <rect y="12" width="10" height="20" fill="#fff"/><path d="M10 13 V32" stroke="#7587b7" stroke-width="2"/>
                        <path d="M13 32 V15 Q14 8 23 3 L34 2 L39 7 L54 8 Q58 11 54 15 L40 16 L43 21 L41 26 L43 32Z" fill="#dfdfbf" stroke="#b28a5c" stroke-width="2"/>
                        <path d="M22 7 Q28 3 33 6 L53 10" stroke="#fffbea" stroke-width="4" fill="none"/>
                        <path d="M34 16 h8 M34 22 h8 M34 27 h7" stroke="#c39a66" stroke-width="3"/>
                    </svg><ui-text width="23">1.</ui-text>
                </div>${cells}
            </div>
            <div class="rest"></div>
            <div class="grid sum">
                <div class="caption" style="grid-column: 1 / ${first + 1}"><ui-text bold>Ukupno:</ui-text></div>${totals}
            </div>
            <div class="bar">
                <div class="grip"></div>
                <div class="track">
                    <svg class="back" width="18" height="26" viewBox="0 0 18 26"><path d="M15 4 L6 13 L15 22" fill="none" stroke="#606060" stroke-width="4.500"/></svg>
                    <div class="thumb"></div>
                    <svg class="next" width="18" height="26" viewBox="0 0 18 26"><path d="M3 4 L12 13 L3 22" fill="none" stroke="#606060" stroke-width="4.500"/></svg>
                </div>
            </div>`;
    }
}
customElements.define('record-list', RecordList);

class TabStrip extends HTMLElement {
    connectedCallback() {
        const doc = DOCS[this.getAttribute('doc')];
        const tabs = doc.tabs.map((tab, i) => {
            const width = doc.tabEdges[i] - (i ? doc.tabEdges[i - 1] : 18);
            return `<div class="tab ${i ? '' : 'on'}" style="width: ${width}px; padding-left: ${i === 0 ? 17 : i === 1 ? 10 : 16}px">
                <ui-text ${i ? '' : 'bold width="132"'}>${tab}</ui-text></div>`;
        }).join('');
        this.attachShadow({mode: 'open'}).innerHTML = `
            <style>
                :host { display: flex; flex: none; height: 60px; margin-top: 14px; align-items: flex-end; }
                .tab {
                    display: flex; align-items: center; flex: none; box-sizing: border-box; height: 56px; overflow: hidden;
                    border-top: 2px solid #dadada; border-right: 2px solid #dadada; border-bottom: 2px solid #dadada;
                }
                .tab.on { height: 60px; background: #fff; border-left: 2px solid #dadada; border-bottom: 0; color: #000; padding-bottom: 6px; }
            </style>${tabs}`;
    }
}
customElements.define('tab-strip', TabStrip);

class TabPage extends HTMLElement {
    connectedCallback() {
        this.attachShadow({mode: 'open'}).innerHTML = `
            <style>
                :host {
                    display: flex; flex: 1; min-height: 0; box-sizing: border-box; background: #fff; margin: 0 5px 3px 1px;
                    border: 2px solid #dcdcdc; border-top: 0; padding: 3px 3px 6px 7px;
                }
                div { flex: 1; background: #efefef; overflow: hidden; }
            </style>
            <div><slot></slot></div>`;
    }
}
customElements.define('tab-page', TabPage);

class DocWindow extends HTMLElement {
    connectedCallback() {
        const active = this.hasAttribute('active');
        const frame = active ? '#b9d1ea' : '#d7e4f2';
        const edge = active ? '#19c5d8' : '#8b949c';
        this.attachShadow({mode: 'open'}).innerHTML = `
            <style>
                :host {
                    display: flex; flex-direction: column; flex: none; box-sizing: border-box;
                    width: ${active ? 1875 : 1876}px; height: 1929px; margin: 5px ${active ? 5 : 1}px 0 0;
                    border: solid; border-width: 2px 2px 2px 2px; border-color: #e5ebf2 ${edge} ${edge} #c8d3de;
                    border-radius: 14px 14px 0 0; outline: 2px solid #181818;
                    background: ${active
                        ? `linear-gradient(#99b4d1 0, #b9d1ea 72px, #b9d1ea 110px, #dbe8f5 290px, #dbe8f5 296px, ${frame} 300px)`
                        : `linear-gradient(#bfcddb 0, #d7e4f2 72px)`};
                }
                header { display: flex; height: 72px; flex: none; padding: 0 21px 0 20px; align-items: flex-start; }
                .logo { margin-top: 26px; }
                .caption { font: 31px 'Open Sans', 'Noto Sans', sans-serif; margin: 25px 0 0 12px; color: ${active ? '#10101c' : '#999'}; }
                .buttons { margin: 20px 0 0 auto; display: flex; gap: 5px; }
                .btn {
                    width: 80px; height: 44px; box-sizing: border-box; border: 2px solid ${active ? '#61768f' : '#8a9bb8'}; border-radius: 4px;
                    box-shadow: inset 0 0 0 2px rgba(255, 255, 255, .45);
                    background: ${active ? 'linear-gradient(#c3d5ea 45%, #97b2d1 45%, #b5cfe9)' : '#c5d3e4'};
                    display: flex; align-items: center; justify-content: center;
                }
                .close { ${active ? 'border-color: #5a1b22; background: linear-gradient(#e8a59b, #dd8a7c 45%, #b93f27 45%, #d67260);' : ''} }
                main {
                    display: flex; flex-direction: column; flex: 1; min-height: 0; margin: 0 15px 17px 16px;
                    background: #efefef; overflow: hidden;
                }
            </style>
            <header>
                <svg class="logo" width="41" height="32" viewBox="0 0 41 32">
                    <path d="M6 3 H35 M20 2 V26" stroke="#17634a" stroke-width="5"/>
                    <path d="M8 4 L2 21 M8 4 L15 21 M33 4 L26 21 M33 4 L39 21" stroke="#287a5c" stroke-width="3"/>
                    <path d="M0 19 H17 Q15 28 8 28 Q2 28 0 19Z M24 19 H41 Q39 28 33 28 Q26 28 24 19Z" fill="#1b7553"/>
                    <path d="M13 27 L18 20 H23 L28 27 V31 H13Z" fill="#10d568" stroke="#17764f" stroke-width="1.500"/>
                </svg>
                <div class="caption"><ui-text width="${this.getAttribute('caption-width')}">${this.getAttribute('caption')}</ui-text></div>
                <div class="buttons">
                    <div class="btn"><svg width="30" height="26"><rect x="2" y="13" width="25" height="10" rx="1" fill="#f3f3f3" stroke="#505668" stroke-width="2"/></svg></div>
                    <div class="btn"><svg width="30" height="26"><rect x="2" y="2" width="25" height="21" rx="1" fill="#f3f3f3" stroke="#505668" stroke-width="2"/><rect x="9" y="8" width="11" height="8" fill="#a9c0da" stroke="#505668" stroke-width="2"/></svg></div>
                    <div class="btn close"><svg width="30" height="26"><path d="M2 2 H10 L14.500 8 L19 2 H27 L20 12.500 L27 23 H19 L14.500 17 L10 23 H2 L9 12.500Z" fill="#f3f3f3" stroke="#505668" stroke-width="2"/></svg></div>
                </div>
            </header>
            <main><slot></slot></main>`;
    }
}
customElements.define('doc-window', DocWindow);

//Red marks that lead from the pro forma to the invoice made of it
class StepArrows extends HTMLElement {
    connectedCallback() {
        this.attachShadow({mode: 'open'}).innerHTML = `
            <style>
                :host { position: absolute; inset: 0; pointer-events: none; }
                svg { display: block; }
            </style>
            <svg width="3757" height="1937" viewBox="0 0 3757 1937" fill="none" stroke="#f00">
                <rect x="588.500" y="137.500" width="183" height="60" rx="1" stroke-width="7.500"/>
                <path d="M262 527 L569 221" stroke-width="7.500" stroke-linecap="round"/>
                <path d="M588 202 L551 222 L560 229 L570 238Z" fill="#f00" stroke="none"/>
                <path d="M775 168 L1895 499" stroke-width="7.500"/>
                <path d="M1923 507 L1889 484 L1890 497 L1883 507Z" fill="#f00" stroke="none"/>
            </svg>`;
    }
}
customElements.define('step-arrows', StepArrows);
</script>
</body>
</html>
